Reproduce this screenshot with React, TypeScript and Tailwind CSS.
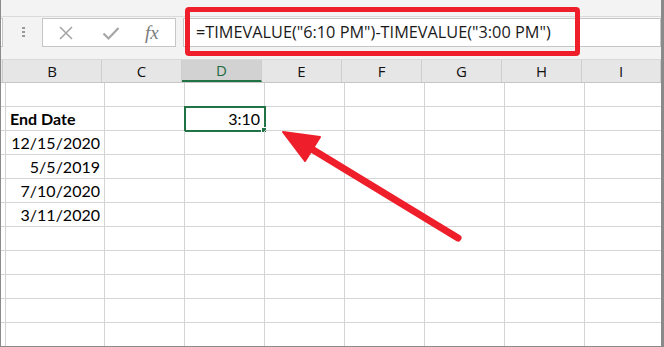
import React from 'react';

const columns = [
  { label: '', width: 'w-[2px]' },
  { label: 'B', width: 'w-[99px]' },
  { label: 'C', width: 'w-[80px]' },
  { label: 'D', width: 'w-[80px]', active: true },
  { label: 'E', width: 'w-[80px]' },
  { label: 'F', width: 'w-[80px]' },
  { label: 'G', width: 'w-[80px]' },
  { label: 'H', width: 'w-[80px]' },
  { label: 'I', width: 'w-[79px]' },
];

type Cell = { text?: string; bold?: boolean; align?: 'left' | 'right'; selected?: boolean };

const rows: Record<number, Cell>[] = [
  {},
  { 1: { text: 'End Date', bold: true, align: 'left' }, 3: { text: '3:10', align: 'right', selected: true } },
  { 1: { text: '12/15/2020', align: 'right' } },
  { 1: { text: '5/5/2019', align: 'right' } },
  { 1: { text: '7/10/2020', align: 'right' } },
  { 1: { text: '3/11/2020', align: 'right' } },
  {},
  {},
  {},
  {},
  {},
];

function FormulaBar() {
  return (
    <div className="flex h-[43px] items-start border-b border-[#d9d9d9] bg-[#f3f3f3]">
      <div className="mt-[1px] h-[29px] w-[2px] border-y border-r border-[#c6c6c6] bg-white" />
      <div className="ml-[19px] mt-[10px] flex w-[4px] flex-col gap-[2px]">
        <span className="h-[2px] w-[3px] bg-[#9a9a9a]" />
        <span className="h-[2px] w-[3px] bg-[#9a9a9a]" />
        <span className="h-[2px] w-[3px] bg-[#9a9a9a]" />
      </div>
      <div className="ml-[16px] mt-[1px] flex h-[29px] w-[134px] items-center border border-[#c6c6c6] bg-white">
        <svg className="ml-[15px]" width="16" height="16" viewBox="0 0 16 16">
          <path d="M2 2 L14 14 M14 2 L2 14" stroke="#a6a6a6" strokeWidth="1.6" fill="none" />
        </svg>
        <svg className="ml-[28px]" width="18" height="16" viewBox="0 0 18 16">
          <path d="M1.5 8.5 L6.5 13.5 L16.5 3" stroke="#a6a6a6" strokeWidth="2.2" fill="none" />
        </svg>
        <span className="ml-[25px] font-['Liberation_Serif',serif] text-[19px] italic leading-none text-[#7a7a7a]">
          fx
        </span>
      </div>
      <div className="ml-[7px] mt-[1px] flex h-[29px] flex-1 items-center border border-[#c6c6c6] bg-white pl-[12px] font-['Open_Sans',sans-serif] text-[16.3px] text-[#1a1a1a]">
        =TIMEVALUE("6:10 PM")-TIMEVALUE("3:00 PM")
      </div>
    </div>
  );
}

function HeaderRow() {
  return (
    <div className="flex h-[23px] border-b border-[#c6c6c6] bg-[#e6e6e6] font-['Open_Sans',sans-serif] text-[15px]">
      {columns.map((col, i) => (
        <div
          key={i}
          className={`${col.width} flex shrink-0 items-center justify-center border-r border-[#cdcdcd] ${
            col.active ? 'border-b-2 border-b-[#217346] bg-[#d2d2d2] text-[#1e6b41]' : 'text-[#111]'
          }`}
        >
          {col.label}
        </div>
      ))}
    </div>
  );
}

function GridRow({ cells }: { cells: Record<number, Cell> }) {
  return (
    <div className="flex h-[24px] font-['Lato',sans-serif] text-[16px] text-black">
      {columns.map((col, i) => {
        const cell = cells[i];
        return (
          <div
            key={i}
            className={`${col.width} relative flex shrink-0 items-center border-r border-b border-[#d4d4d4] ${
              cell?.align === 'right' ? 'justify-end pr-[4px]' : 'justify-start pl-[4px]'
            } ${cell?.bold ? 'font-bold' : ''}`}
          >
            {cell?.text}
            {cell?.selected && (
              <>
                <span className="absolute -left-[1px] -top-[1px] h-[26px] w-[82px] border-2 border-[#217346]" />
                <span className="absolute -bottom-[3px] -right-[3px] h-[6px] w-[6px] border border-white bg-[#217346]" />
              </>
            )}
          </div>
        );
      })}
    </div>
  );
}

export default function App() {
  return (
    <div className="relative h-[347px] w-[664px] overflow-hidden border-r-[3px] border-b-[1px] border-l border-[#8a8a8a] bg-white">
      <div className="h-[17px] border-b border-[#dadada] bg-[#f3f3f3]" />
      <FormulaBar />
      <HeaderRow />
      {rows.map((cells, i) => (
        <GridRow key={i} cells={cells} />
      ))}

      {/* annotation: red box around formula */}
      <div className="pointer-events-none absolute left-[184px] top-[7px] h-[49px] w-[395px] rounded-[4px] border-[5px] border-[#ee1f2a]" />

      {/* annotation: arrow */}
      <svg className="pointer-events-none absolute -left-[1px] top-0" width="664" height="347" viewBox="0 0 664 347">
        <line x1="458" y1="238" x2="310" y2="148" stroke="#ee1f2a" strokeWidth="7" strokeLinecap="round" />
        <polygon points="283,132 320,137 305,161" fill="#ee1f2a" stroke="#ee1f2a" strokeWidth="2" strokeLinejoin="round" />
      </svg>
    </div>
  );
}
